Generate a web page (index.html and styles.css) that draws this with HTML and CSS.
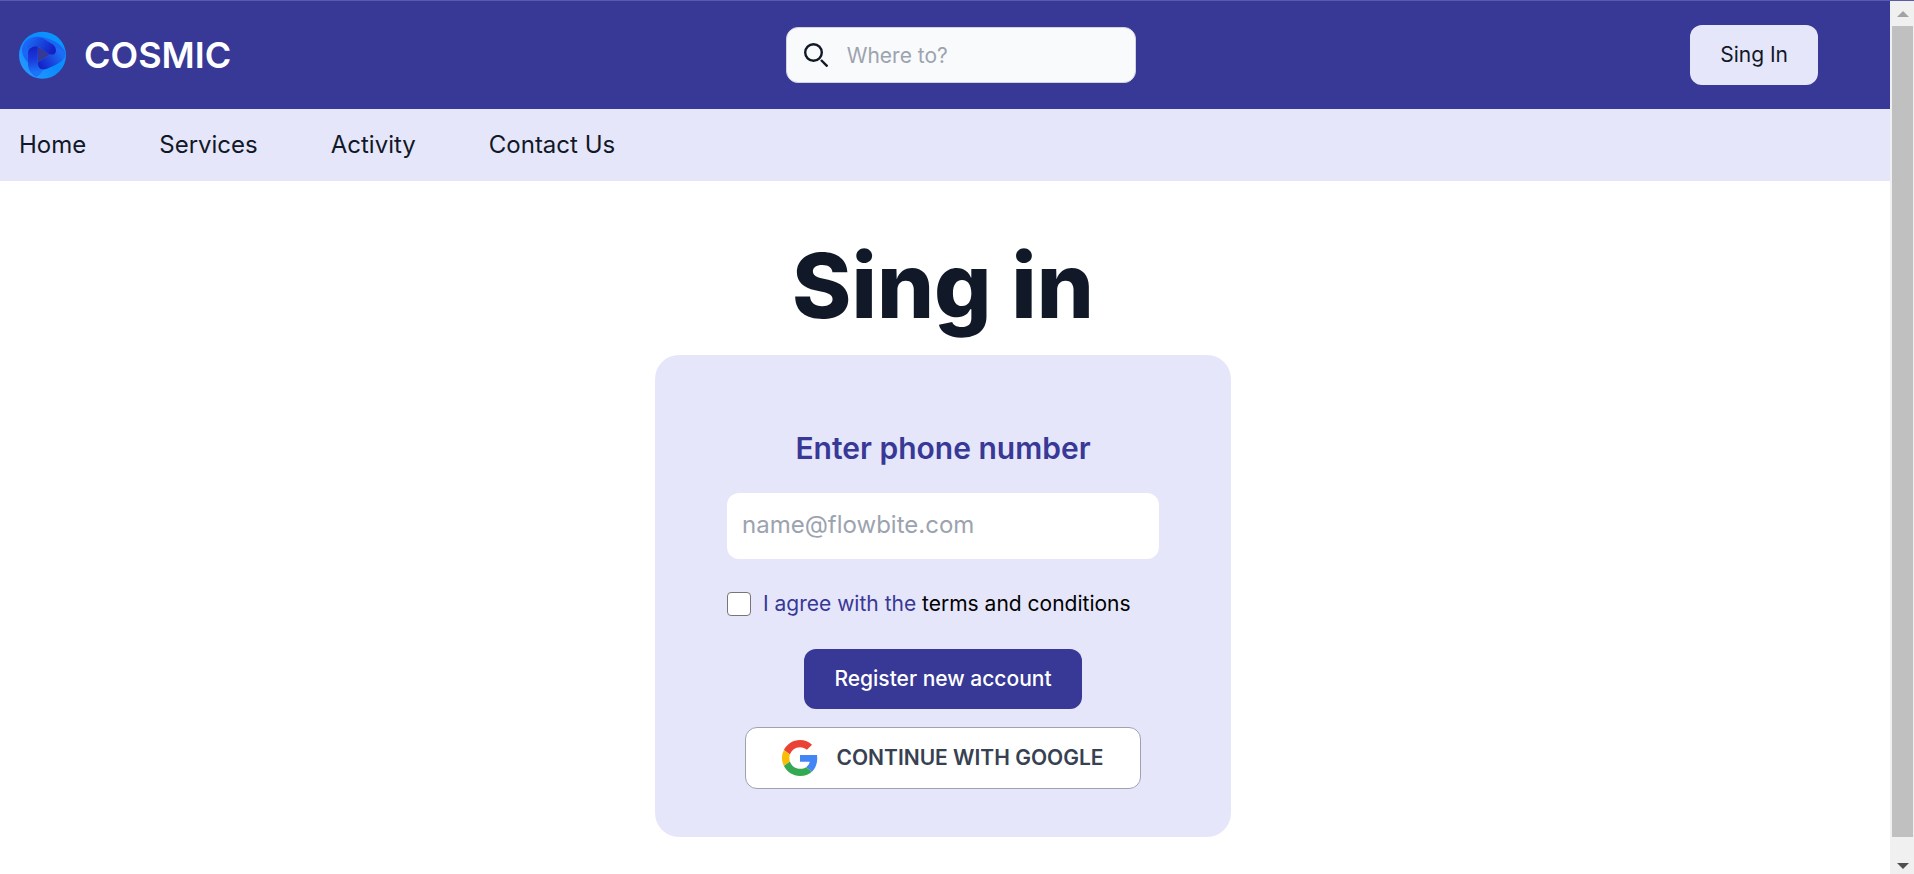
FILE: index.html
```html
<!DOCTYPE html>
<html lang="en">
<head>
<meta charset="utf-8">
<meta name="viewport" content="width=device-width, initial-scale=1">
<title>Cosmic</title>
<link rel="stylesheet" href="styles.css">
</head>
<body>
<div class="page">
  <header class="topbar">
    <a class="brand" href="#">
      <svg class="brand-icon" viewBox="54 92 143 143" aria-hidden="true">
        <defs>
          <linearGradient id="disc" x1="0" y1="1" x2="1" y2="0"><stop offset="0" stop-color="#2f9dff"/><stop offset=".5" stop-color="#0a8cff"/><stop offset="1" stop-color="#0a98ff"/></linearGradient>
          <linearGradient id="top" gradientUnits="userSpaceOnUse" x1="95" y1="115" x2="155" y2="155"><stop offset="0" stop-color="#1b62f0"/><stop offset="1" stop-color="#1420c4"/></linearGradient>
          <linearGradient id="left" gradientUnits="userSpaceOnUse" x1="100" y1="140" x2="108" y2="215"><stop offset="0" stop-color="#1522c6"/><stop offset=".5" stop-color="#1b3bdc"/><stop offset="1" stop-color="#1a74f8"/></linearGradient>
          <linearGradient id="right" gradientUnits="userSpaceOnUse" x1="178" y1="155" x2="120" y2="195"><stop offset="0" stop-color="#1d6cf5"/><stop offset="1" stop-color="#1522c6"/></linearGradient>
        </defs>
        <path fill="url(#disc)" fill-rule="evenodd" d="M127 94a70 70 0 1 1 0 140a70 70 0 1 1 0-140zM113 138V185L152 161z"/>
        <path fill="#1b66f4" d="M66 142C72 120 92 107 114 109C142 109 190 130 195 158C196 170 184 182 172 188L150 161L113 138C96 134 84 142 84 160V186C72 174 64 158 66 142z"/>
        <path fill="url(#top)" d="M82 132C90 110 112 106 130 115L158 132C170 142 170 158 160 164L148 161L113 138C103 137 92 139 82 148z"/>
        <path fill="url(#left)" d="M84 156C84 144 98 136 113 138V192C114 204 120 208 130 207C122 220 114 228 108 228C92 220 84 206 84 190z"/>
        <path fill="url(#right)" d="M113 185L150 162C164 166 172 154 166 142C180 144 194 152 195 160C193 180 176 190 142 204C126 211 114 205 113 192z"/>
      </svg>
      <span>COSMIC</span>
    </a>
    <form class="search" role="search">
      <svg class="search-icon" viewBox="0 0 24 24" fill="none" stroke="#111827" stroke-width="2.400" aria-hidden="true"><circle cx="9.500" cy="9.500" r="8.300"/><path d="M17 17l6.500 6.500"/></svg>
      <input type="search" placeholder="Where to?" aria-label="Where to?">
    </form>
    <button class="button button-light" type="button">Sing In</button>
  </header>
  <nav class="nav">
    <a href="#">Home</a>
    <a href="#">Services</a>
    <a href="#">Activity</a>
    <a href="#">Contact Us</a>
  </nav>
  <main class="main">
    <h1>Sing in</h1>
    <form class="card">
      <label class="field-label" for="phone">Enter phone number</label>
      <input class="field" id="phone" type="text" placeholder="name@flowbite.com">
      <div class="terms">
        <input id="terms" type="checkbox">
        <label for="terms">I agree with the <a href="#">terms and conditions</a></label>
      </div>
      <button class="button button-primary" type="submit">Register new account</button>
      <button class="button button-google" type="button">
        <svg class="google-icon" viewBox="0 0 48 48" aria-hidden="true">
          <path fill="#EA4335" d="M24 9.500c3.540 0 6.710 1.220 9.210 3.600l6.850-6.850C35.900 2.380 30.470 0 24 0 14.620 0 6.510 5.380 2.560 13.220l7.980 6.190C12.430 13.720 17.740 9.500 24 9.500z"/>
          <path fill="#4285F4" d="M46.980 24.550c0-1.570-.15-3.090-.38-4.550H24v9.020h12.940c-.58 2.960-2.260 5.480-4.780 7.180l7.730 6c4.510-4.180 7.090-10.360 7.090-17.650z"/>
          <path fill="#FBBC05" d="M10.530 28.590c-.48-1.450-.76-2.990-.76-4.590s.27-3.140.76-4.590l-7.980-6.190C.92 16.460 0 20.120 0 24c0 3.880.92 7.540 2.560 10.780l7.970-6.190z"/>
          <path fill="#34A853" d="M24 48c6.480 0 11.930-2.130 15.890-5.810l-7.730-6c-2.150 1.450-4.920 2.300-8.160 2.300-6.260 0-11.570-4.220-13.470-9.910l-7.980 6.190C6.510 42.620 14.620 48 24 48z"/>
        </svg>
        <span>CONTINUE WITH GOOGLE</span>
      </button>
    </form>
  </main>
</div>
<div class="scrollbar" aria-hidden="true">
  <svg class="arrow arrow-up" viewBox="0 0 12 6"><path d="M6 0l6 6H0z"/></svg>
  <div class="thumb"></div>
  <svg class="arrow arrow-down" viewBox="0 0 12 6"><path d="M0 0h12L6 6z"/></svg>
</div>
</body>
</html>
```

FILE: styles.css
```css
*, *::before, *::after { box-sizing: border-box; }

body {
  margin: 0;
  min-height: 100vh;
  display: flex;
  border-top: 1px solid #5a5aa8;
  background: #fff;
  color: #111827;
  font-family: Inter, "Liberation Sans", sans-serif;
  font-size: 21px;
  line-height: 30px;
}

a { color: inherit; text-decoration: none; }
button, input { font: inherit; color: inherit; }
input::placeholder { color: #9ca3af; opacity: 1; }

.page { flex: 1; min-width: 0; }

.topbar {
  display: flex;
  align-items: center;
  justify-content: space-between;
  gap: 24px;
  padding: 24px 72px 24px 18px;
  background: #383896;
}

.brand {
  display: flex;
  align-items: center;
  gap: 18px;
  color: #fff;
  font-size: 36px;
  line-height: 48px;
  font-weight: 600;
}
.brand-icon { width: 48px; height: 48px; }

.search { position: relative; width: 350px; }
.search-icon {
  position: absolute;
  left: 18px;
  top: 16px;
  width: 24px;
  height: 24px;
}
.search input {
  display: block;
  width: 100%;
  height: 56px;
  padding: 12px 12px 12px 60px;
  border: 1px solid #d1d5db;
  border-radius: 12px;
  background: #f9fafb;
  appearance: none;
}

.button {
  padding: 15px 30px;
  border: 0;
  border-radius: 12px;
  font-weight: 500;
}
.button-light { background: #e6e6fa; font-weight: 400; }
.button-primary { background: #383896; color: #fff; }
.button-google {
  display: flex;
  align-items: center;
  gap: 18px;
  padding: 12px 36px;
  border: 1px solid #9ca3af;
  background: #fff;
  color: #374151;
  font-weight: 600;
  line-height: 36px;
}
.google-icon { width: 36px; height: 36px; }

.nav {
  display: flex;
  gap: 73px;
  padding: 18px 19px;
  background: #e6e6fa;
  font-size: 24px;
  line-height: 36px;
}

.main {
  display: flex;
  flex-direction: column;
  align-items: center;
  padding: 60px 4px 36px 0;
}

h1 {
  margin: 0 0 24px;
  font-size: 90px;
  line-height: 90px;
  font-weight: 800;
}

.card {
  display: flex;
  flex-direction: column;
  align-items: center;
  width: 576px;
  max-width: 100%;
  padding: 72px 72px 48px;
  border-radius: 24px;
  background: #e6e6fa;
}
.field-label {
  margin-bottom: 24px;
  color: #383896;
  font-size: 30px;
  line-height: 42px;
  font-weight: 600;
}
.field {
  width: 100%;
  height: 66px;
  padding: 12px 15px 15px;
  border: 0;
  border-radius: 12px;
  background: #fff;
  font-size: 24px;
}
.terms {
  display: flex;
  align-items: center;
  align-self: flex-start;
  gap: 12px;
  margin: 30px 0;
  color: #383896;
}
.terms input {
  width: 24px;
  height: 24px;
  margin: 0;
  border: 1px solid #767676;
  border-radius: 4px;
  background: #fff;
  appearance: none;
}
.terms input:checked { background: #383896; }
.terms a { color: #000; }
.button-primary { margin-bottom: 18px; }

.scrollbar {
  display: flex;
  flex-direction: column;
  align-items: center;
  justify-content: space-between;
  width: 24px;
  padding: 10px 1px 5px 2px;
  background: #f0f0f0;
}
.arrow { width: 12px; height: 6px; }
.arrow-up { fill: #a3a3a3; }
.arrow-down { fill: #505050; }
.thumb { flex: 1; width: 100%; margin: 9px 0 26px; background: #c0c0c0; }
```
